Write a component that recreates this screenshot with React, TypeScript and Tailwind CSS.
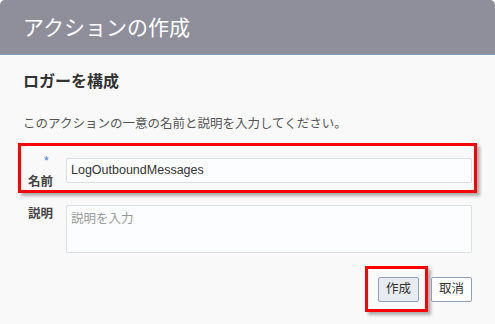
const jp = { fontFamily: '"Liberation Sans", "Noto Sans CJK JP", sans-serif' };

export default function App() {
  return (
    <div className="flex h-[324px] w-[495px] flex-col overflow-hidden rounded-t-[5px] bg-[#f9f9f9]" style={jp}>
      <div className="flex h-[55px] shrink-0 items-center border-b border-[#7f9db6] bg-[#8e8f9b] pl-[23px]">
        <h1 className="text-[21px] leading-none text-white">アクションの作成</h1>
      </div>

      <div className="flex flex-col px-[23px]">
        <h2 className="mt-[15px] text-[16px] font-bold leading-[24px] text-[#333]">ロガーを構成</h2>
        <p className="mt-[21px] text-[12.5px] leading-[18px] text-[#555]">
          このアクションの一意の名前と説明を入力してください。
        </p>

        {/* name row, outlined in red */}
        <div className="ml-[-5px] mt-[10px] flex h-[50px] w-[459px] border-[3px] border-[#f00] shadow-[3px_3px_3px_rgba(0,0,0,0.3)]">
          <div className="flex w-[45px] shrink-0 flex-col pl-[7px]">
            <span className="mt-[8px] h-[14px] pl-[16px] text-[12px] leading-[14px] text-[#3a7bd5]">*</span>
            <span className="mt-[6px] text-[12.5px] leading-[16px] font-bold text-[#444]">名前</span>
          </div>
          <div className="mr-[2px] mt-[12px] flex h-[25px] flex-1 items-center rounded-[2px] border border-[#dcdfe3] bg-[#fcfdfe] pl-[4px] text-[12.5px] text-[#333]">
            LogOutboundMessages
          </div>
        </div>

        <div className="mt-[12px] flex">
          <span className="mt-[1px] w-[43px] shrink-0 pl-[5px] text-[12.5px] leading-[16px] font-bold text-[#444]">説明</span>
          <div className="h-[48px] flex-1 rounded-[2px] border border-[#dcdfe3] bg-[#fcfdfe] pl-[4px] pt-[4px] text-[12.5px] leading-[18px] text-[#999]">
            説明を入力
          </div>
        </div>

        <div className="mt-[13px] flex items-start justify-end">
          <div className="border-[3px] border-[#f00] pb-[7px] pl-[10px] pr-[6px] pt-[8px] shadow-[3px_3px_3px_rgba(0,0,0,0.3)]">
            <button className="flex h-[25px] w-[41px] items-center justify-center rounded-[2px] border border-[#8da2b8] bg-[#e8ecf0] text-[12.5px] text-[#333]">
              作成
            </button>
          </div>
          <button className="ml-[3px] mt-[11px] flex h-[25px] w-[41px] items-center justify-center rounded-[2px] border border-[#8da2b8] bg-white text-[12.5px] text-[#333]">
            取消
          </button>
        </div>
      </div>
    </div>
  );
}
